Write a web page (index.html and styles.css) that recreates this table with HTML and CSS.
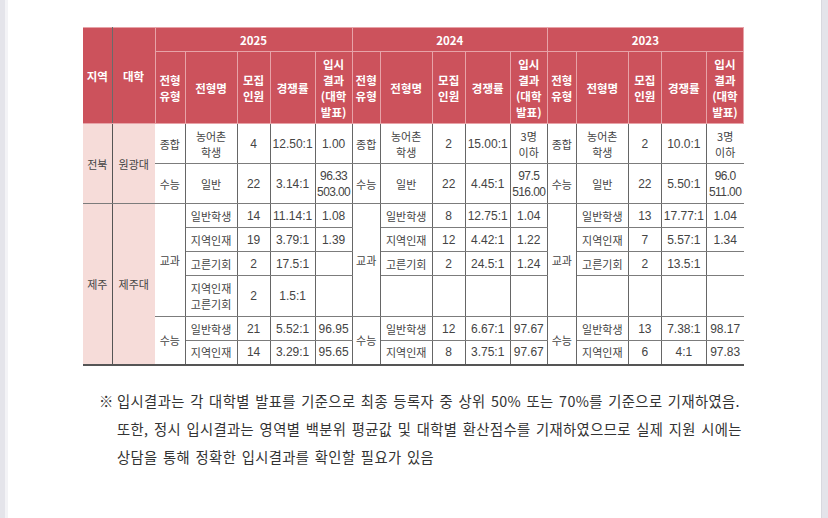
FILE: index.html
```html
<!DOCTYPE html>
<html lang="ko">
<head>
<meta charset="utf-8">
<title>입시결과</title>
<link rel="stylesheet" href="styles.css">
</head>
<body>
<div class="screen">
  <div class="edge-l"></div>
  <main class="page">
    <table class="admit">
      <colgroup>
        <col class="c-region"><col class="c-uni">
        <col class="c-type"><col class="c-name"><col class="c-num"><col class="c-rate"><col class="c-res">
        <col class="c-type2"><col class="c-name"><col class="c-num"><col class="c-rate"><col class="c-res">
        <col class="c-type3"><col class="c-name"><col class="c-num"><col class="c-rate"><col class="c-res">
      </colgroup>
      <thead>
        <tr class="yr">
          <th rowspan="2" class="h-region">지역</th>
          <th rowspan="2">대학</th>
          <th colspan="5">2025</th>
          <th colspan="5">2024</th>
          <th colspan="5">2023</th>
        </tr>
        <tr class="sub">
          <th>전형<br>유형</th><th>전형명</th><th>모집<br>인원</th><th>경쟁률</th><th>입시<br>결과<br>(대학<br>발표)</th>
          <th>전형<br>유형</th><th>전형명</th><th>모집<br>인원</th><th>경쟁률</th><th>입시<br>결과<br>(대학<br>발표)</th>
          <th>전형<br>유형</th><th>전형명</th><th>모집<br>인원</th><th>경쟁률</th><th>입시<br>결과<br>(대학<br>발표)</th>
        </tr>
      </thead>
      <tbody>
        <tr class="r40">
          <td rowspan="2" class="region k">전북</td>
          <td rowspan="2" class="uni k">원광대</td>
          <td class="k">종합</td><td class="k">농어촌<br>학생</td><td>4</td><td>12.50:1</td><td>1.00</td>
          <td class="k">종합</td><td class="k">농어촌<br>학생</td><td>2</td><td>15.00:1</td><td class="k">3명<br>이하</td>
          <td class="k">종합</td><td class="k">농어촌<br>학생</td><td>2</td><td>10.0:1</td><td class="k last">3명<br>이하</td>
        </tr>
        <tr class="r40">
          <td class="k">수능</td><td class="k">일반</td><td>22</td><td>3.14:1</td><td class="tight">96.33<br>503.00</td>
          <td class="k">수능</td><td class="k">일반</td><td>22</td><td>4.45:1</td><td class="tight">97.5<br>516.00</td>
          <td class="k">수능</td><td class="k">일반</td><td>22</td><td>5.50:1</td><td class="tight last">96.0<br>511.00</td>
        </tr>
        <tr class="r24">
          <td rowspan="6" class="region k bot">제주</td>
          <td rowspan="6" class="uni k bot">제주대</td>
          <td rowspan="4" class="k">교과</td><td class="k">일반학생</td><td>14</td><td>11.14:1</td><td>1.08</td>
          <td rowspan="4" class="k">교과</td><td class="k">일반학생</td><td>8</td><td>12.75:1</td><td>1.04</td>
          <td rowspan="4" class="k">교과</td><td class="k">일반학생</td><td>13</td><td>17.77:1</td><td class="last">1.04</td>
        </tr>
        <tr class="r24">
          <td class="k">지역인재</td><td>19</td><td>3.79:1</td><td>1.39</td>
          <td class="k">지역인재</td><td>12</td><td>4.42:1</td><td>1.22</td>
          <td class="k">지역인재</td><td>7</td><td>5.57:1</td><td class="last">1.34</td>
        </tr>
        <tr class="r24">
          <td class="k">고른기회</td><td>2</td><td>17.5:1</td><td></td>
          <td class="k">고른기회</td><td>2</td><td>24.5:1</td><td>1.24</td>
          <td class="k">고른기회</td><td>2</td><td>13.5:1</td><td class="last"></td>
        </tr>
        <tr class="r41">
          <td class="k">지역인재<br>고른기회</td><td>2</td><td>1.5:1</td><td></td>
          <td></td><td></td><td></td><td></td>
          <td></td><td></td><td></td><td class="last"></td>
        </tr>
        <tr class="r24">
          <td rowspan="2" class="k bot">수능</td><td class="k">일반학생</td><td>21</td><td>5.52:1</td><td>96.95</td>
          <td rowspan="2" class="k bot">수능</td><td class="k">일반학생</td><td>12</td><td>6.67:1</td><td>97.67</td>
          <td rowspan="2" class="k bot">수능</td><td class="k">일반학생</td><td>13</td><td>7.38:1</td><td class="last">98.17</td>
        </tr>
        <tr class="r24 bottom">
          <td class="k">지역인재</td><td>14</td><td>3.29:1</td><td>95.65</td>
          <td class="k">지역인재</td><td>8</td><td>3.75:1</td><td>97.67</td>
          <td class="k">지역인재</td><td>6</td><td>4:1</td><td class="last">97.83</td>
        </tr>
      </tbody>
    </table>

    <div class="note">
      <span class="mark">※</span>
      <p class="note-text">입시결과는 각 대학별 발표를 기준으로 최종 등록자 중 상위 50% 또는 70%를 기준으로 기재하였음.<br>또한, 정시 입시결과는 영역별 백분위 평균값 및 대학별 환산점수를 기재하였으므로 실제 지원 시에는<br>상담을 통해 정확한 입시결과를 확인할 필요가 있음</p>
    </div>
  </main>
  <div class="edge-r"></div>
</div>
</body>
</html>
```

FILE: styles.css
```css
html, body {
  margin: 0;
  padding: 0;
  background: #ffffff;
}

.screen {
  display: flex;
  height: 518px;
  overflow: hidden;
}

.edge-l {
  width: 5px;
  background: #e4e4ea;
  border-right: 3px solid #f3f3f6;
  flex: none;
}

.edge-r {
  width: 6px;
  background: #e4e4ea;
  border-left: 1px solid #d8d8de;
  flex: none;
}

.page {
  flex: 1;
  padding: 27px 0 0 75px;
  min-width: 0;
}

/* ---------- table ---------- */
.admit {
  border-collapse: collapse;
  table-layout: fixed;
  width: 661px;
  font-family: "Liberation Sans", "Noto Sans CJK KR", sans-serif;
  font-size: 12px;
  color: #444;
  text-align: center;
}

.c-region { width: 29px; }
.c-uni { width: 43px; }
.c-type { width: 30px; }
.c-type2 { width: 28px; }
.c-type3 { width: 29px; }
.c-name { width: 52px; }
.c-num { width: 33px; }
.c-rate { width: 45px; }
.c-res { width: 37px; }

.admit th {
  background: #cc525c;
  color: #ffffff;
  font-family: "Noto Sans CJK KR", sans-serif;
  font-weight: 700;
  font-size: 11.5px;
  line-height: 16px;
  border: 1px solid #e7a3a8;
  border-left: none;
  padding: 0;
}

.admit th.h-region {
  border-right: 1px solid #6a6a6a;
}

.admit tr.yr { height: 24px; }
.admit tr.sub { height: 72px; }

.admit td {
  padding: 0;
  line-height: 16px;
  border-right: 1px solid #666;
  border-bottom: 1px solid #7c7c7c;
  vertical-align: middle;
}

.admit td.k {
  font-family: "Noto Sans CJK KR", sans-serif;
  font-size: 11px;
}

.admit td.tight {
  letter-spacing: -0.6px;
}

.admit td.region {
  background: #f6dcd9;
  border-right: 1px solid #555;
}

.admit td.uni {
  background: #f6dcd9;
  border-right: none;
}

.admit td.last {
  border-right: none;
}

.admit tr.r40 { height: 40px; }
.admit tr.r41 { height: 41px; }
.admit tr.r24 { height: 24px; }

.admit tr.bottom td,
.admit td.bot {
  border-bottom: 2px solid #555;
}

/* ---------- footnote ---------- */
.note {
  display: flex;
  margin: 21px 0 0 16px;
  font-family: "Noto Sans CJK KR", sans-serif;
  font-size: 14.3px;
  line-height: 28px;
  letter-spacing: 0.4px;
  word-spacing: 1px;
  color: #333;
  white-space: nowrap;
}

.note .mark {
  width: 18px;
  flex: none;
  letter-spacing: 0;
}

.note-text {
  margin: 0;
}
```
